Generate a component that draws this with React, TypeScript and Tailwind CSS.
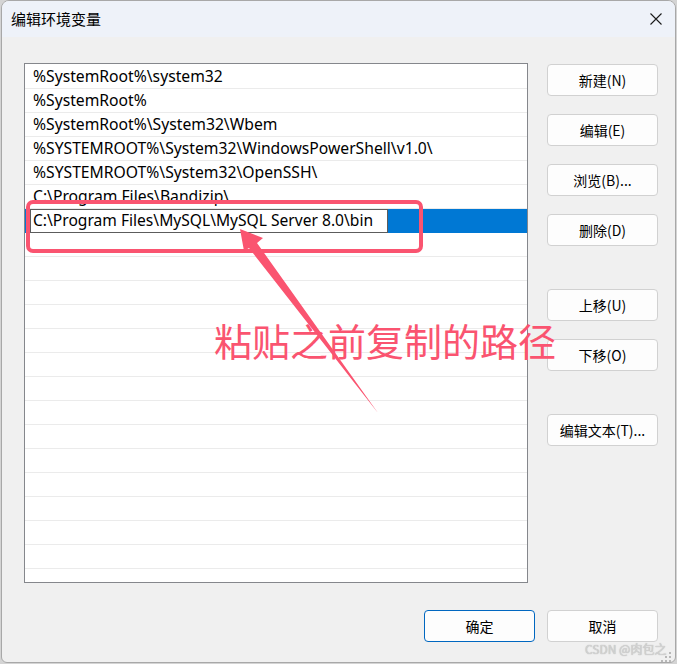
import React from "react";

const rows = [
  "%SystemRoot%\\system32",
  "%SystemRoot%",
  "%SystemRoot%\\System32\\Wbem",
  "%SYSTEMROOT%\\System32\\WindowsPowerShell\\v1.0\\",
  "%SYSTEMROOT%\\System32\\OpenSSH\\",
  "C:\\Program Files\\Bandizip\\",
];

const ui = { fontFamily: '"Noto Sans", "Noto Sans CJK SC", sans-serif' };
const cjk = { fontFamily: '"Noto Sans CJK SC", "Noto Sans", sans-serif' };

function Btn({ label, cls = "" }: { label: string; cls?: string }) {
  return (
    <div
      className={
        "w-[111px] h-[32px] flex items-center justify-center rounded-[4px] border border-[#d1d1d1] bg-[#fdfdfd] text-[14px] text-black " +
        cls
      }
      style={cjk}
    >
      {label}
    </div>
  );
}

export default function App() {
  const empty = Array.from({ length: 16 });
  return (
    <div className="w-[677px] h-[664px] bg-[#d4d4d4] relative overflow-hidden">
      <div className="ml-[1px] w-[675px] h-[663px] rounded-t-[8px] rounded-b-[6px] border border-[#a8a8a8] bg-[#f0f0f0] flex flex-col overflow-hidden">
        {/* title bar */}
        <div className="h-[36px] bg-[#eef2f9] flex items-center justify-between pl-[9px] pr-[13px]">
          <span className="text-[15px] text-black" style={cjk}>
            编辑环境变量
          </span>
          <svg width="12" height="12" viewBox="0 0 12 12">
            <path d="M0.5 0.5 L11.5 11.5 M11.5 0.5 L0.5 11.5" stroke="#1b1b1b" strokeWidth="1.1" fill="none" />
          </svg>
        </div>
        {/* body */}
        <div className="flex-1 flex flex-col pl-[22px] pt-[26px]">
          <div className="flex">
            {/* list */}
            <div className="w-[504px] h-[520px] border border-[#85878c] bg-white pt-[1px] overflow-hidden" style={ui}>
              {rows.map((r, i) => (
                <div key={i} className="h-[24px] border-b border-[#ebebeb] pl-[8px] flex items-center text-[15.7px] text-black whitespace-nowrap">
                  {r}
                </div>
              ))}
              <div className="h-[24px] bg-[#0078d4] pl-[5px] flex">
                <div className="w-[358px] h-[24px] bg-white border border-[#5c5c5c] pl-[2px] flex items-center text-[15.6px] text-black whitespace-nowrap">
                  C:\Program Files\MySQL\MySQL Server 8.0\bin
                </div>
              </div>
              {empty.map((_, i) => (
                <div key={i} className="h-[24px] border-b border-[#ebebeb]" />
              ))}
            </div>
            {/* buttons */}
            <div className="ml-[19px] pt-[1px] flex flex-col">
              <div className="flex flex-col gap-[18px]">
                <Btn label="新建(N)" />
                <Btn label="编辑(E)" />
                <Btn label="浏览(B)..." />
                <Btn label="删除(D)" />
              </div>
              <div className="mt-[43px] flex flex-col gap-[18px]">
                <Btn label="上移(U)" />
                <Btn label="下移(O)" />
              </div>
              <div className="mt-[43px]">
                <Btn label="编辑文本(T)..." />
              </div>
            </div>
          </div>
          {/* bottom buttons */}
          <div className="mt-[27px] flex justify-end gap-[12px] pr-[17px]">
            <Btn label="确定" cls="!border-[#0067c0] border-[1.5px]" />
            <Btn label="取消" />
          </div>
        </div>
      </div>

      {/* annotation overlay */}
      <svg className="absolute left-0 top-0 pointer-events-none" width="677" height="664" viewBox="0 0 677 664">
        <rect x="28" y="202" width="393" height="49" rx="5" ry="5" fill="none" stroke="#fa5470" strokeWidth="4" />
        <polygon points="240,229 263,238 257,243 378,413 249,248 244,251" fill="#fa5470" />
        {[
          [669, 652],
          [665, 656],
          [669, 656],
          [661, 660],
          [665, 660],
          [669, 660],
        ].map(([x, y], i) => (
          <rect key={i} x={x} y={y} width="2" height="2" fill="#b8b8b8" />
        ))}
      </svg>
      <div
        className="absolute left-[214px] top-[318px] text-[38px] leading-[44px] text-[#fa5470] font-normal whitespace-nowrap"
        style={cjk}
      >
        粘贴之前复制的路径
      </div>
      <div
        className="absolute left-[585px] top-[642px] text-[12px] leading-[14px] text-[#d2d2d2] whitespace-nowrap"
        style={{ ...cjk, textShadow: "0 0 1px rgba(120,120,120,0.6)" }}
      >
        CSDN @肉包之
      </div>
    </div>
  );
}
